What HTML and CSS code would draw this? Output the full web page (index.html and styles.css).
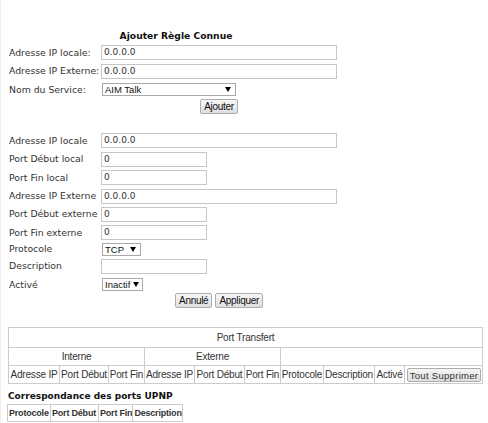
FILE: index.html
```html
<!DOCTYPE html>
<html lang="fr">
<head>
<meta charset="utf-8">
<title>Port Transfert</title>
<link rel="stylesheet" href="styles.css">
</head>
<body>
<div class="page">
  <div class="rule-form">
    <div class="form-title">Ajouter Règle Connue</div>
    <div class="grid known">
      <label class="lbl">Adresse IP locale:</label>
      <div class="field wide">0.0.0.0</div>
      <label class="lbl">Adresse IP Externe:</label>
      <div class="field wide">0.0.0.0</div>
      <label class="lbl">Nom du Service:</label>
      <div class="select svc"><span>AIM Talk</span><svg width="6" height="5" viewBox="0 0 6 5"><path d="M0 0H6L3 5Z"/></svg></div>
      <span></span>
      <div class="actions"><button class="btn">Ajouter</button></div>
    </div>
  </div>

  <div class="rule-form second">
    <div class="grid custom">
      <label class="lbl">Adresse IP locale</label>
      <div class="field wide">0.0.0.0</div>
      <label class="lbl">Port Début local</label>
      <div class="field short">0</div>
      <label class="lbl">Port Fin local</label>
      <div class="field short">0</div>
      <label class="lbl">Adresse IP Externe</label>
      <div class="field wide">0.0.0.0</div>
      <label class="lbl">Port Début externe</label>
      <div class="field short">0</div>
      <label class="lbl">Port Fin externe</label>
      <div class="field short">0</div>
      <label class="lbl">Protocole</label>
      <div class="select proto"><span>TCP</span><svg width="6" height="5" viewBox="0 0 6 5"><path d="M0 0H6L3 5Z"/></svg></div>
      <label class="lbl">Description</label>
      <div class="field short"></div>
      <label class="lbl">Activé</label>
      <div class="select active"><span>Inactif</span><svg width="6" height="5" viewBox="0 0 6 5"><path d="M0 0H6L3 5Z"/></svg></div>
      <span></span>
      <div class="actions"><button class="btn">Annulé</button><button class="btn">Appliquer</button></div>
    </div>
  </div>

  <table class="fwd">
    <colgroup>
      <col class="c51"><col class="c49"><col class="c36">
      <col class="c50"><col class="c50"><col class="c36">
      <col class="c43"><col class="c51"><col class="c30"><col class="c78">
    </colgroup>
    <tr><td colspan="10" class="caption">Port Transfert</td></tr>
    <tr><td colspan="3">Interne</td><td colspan="3">Externe</td><td colspan="4"></td></tr>
    <tr>
      <td>Adresse IP</td><td>Port Début</td><td>Port Fin</td>
      <td>Adresse IP</td><td>Port Début</td><td>Port Fin</td>
      <td>Protocole</td><td>Description</td><td>Activé</td>
      <td class="btn-cell"><button class="btn del">Tout Supprimer</button></td>
    </tr>
  </table>

  <div class="upnp-title">Correspondance des ports UPNP</div>
  <table class="upnp">
    <colgroup><col class="c43"><col class="c48"><col class="c34"><col class="c50"></colgroup>
    <tr><td>Protocole</td><td>Port Début</td><td>Port Fin</td><td>Description</td></tr>
  </table>
</div>
</body>
</html>
```
FILE: styles.css
```css
html, body {
  margin: 0;
  padding: 0;
  background: #fff;
}

.page {
  padding: 29px 0 0 1px;
  font-family: "DejaVu Sans", Verdana, sans-serif;
  font-size: 9.3px;
  color: #333;
  border-left: 1px solid #eee;
  height: 423px;
  box-sizing: border-box;
  overflow: hidden;
}

.rule-form {
  width: 330px;
  margin-left: 7px;
}

.form-title {
  text-align: center;
  font-weight: bold;
  font-size: 9.2px;
  color: #111;
  margin-left: 4px;
  height: 14px;
  line-height: 14px;
}

.grid {
  display: grid;
  grid-template-columns: 92px 236px;
  align-items: center;
}

.grid.known {
  grid-template-rows: 19px 18.5px 18px 15px;
}

.grid.custom {
  grid-template-rows: 18.5px 18.5px 18.5px 18.5px 17.5px 19.5px 14px 20px 17px 15px;
}

.second {
  margin-top: 17.75px;
}

.lbl {
  white-space: nowrap;
  line-height: 14px;
}

.field {
  box-sizing: border-box;
  height: 15px;
  border: 1px solid #c6c6c6;
  background: #fff;
  padding: 0 2px;
  line-height: 13px;
  font-family: "DejaVu Sans", sans-serif;
  font-size: 9px;
  color: #333;
}

.field.wide { width: 236px; }
.field.short { width: 106px; }

.select {
  box-sizing: border-box;
  height: 13px;
  margin-left: 1px;
  border: 1px solid #a9a9a9;
  background: #fff;
  display: flex;
  align-items: center;
  justify-content: space-between;
  padding: 0 4px 0 2px;
  font-family: "Liberation Sans", Arial, sans-serif;
  font-size: 9.5px;
  color: #111;
}

.select svg { fill: #000; flex: none; }
.select.svc { width: 134px; }
.select.proto { width: 39px; }
.select.active { width: 41px; padding-right: 3px; }

.actions {
  display: flex;
  justify-content: center;
  gap: 3px;
}

.btn {
  box-sizing: border-box;
  height: 15px;
  padding: 0 3px;
  border: 1px solid #adadad;
  border-radius: 2px;
  background: linear-gradient(#f6f6f6, #dedede);
  font-family: "Liberation Sans", Arial, sans-serif;
  font-size: 10px;
  letter-spacing: -0.3px;
  color: #111;
  line-height: 13px;
}

.fwd {
  margin: 19px 0 0 6px;
  width: 475px;
  table-layout: fixed;
  border-collapse: collapse;
  font-family: "Liberation Sans", Arial, sans-serif;
  font-size: 10px;
  letter-spacing: -0.2px;
  color: #333;
}

.c30 { width: 30px; }
.c34 { width: 34px; }
.c36 { width: 36px; }
.c43 { width: 43px; }
.c48 { width: 48px; }
.c49 { width: 49px; }
.c50 { width: 50px; }
.c51 { width: 51px; }
.c78 { width: 78px; }

.fwd td {
  border: 1px solid #ccc;
  padding: 0;
  height: 17px;
  text-align: center;
  white-space: nowrap;
  overflow: hidden;
}

.fwd td.caption {
  height: 19px;
}

.fwd td.btn-cell {
  padding: 0 2px;
}

.btn.del {
  width: 74px;
  height: 14px;
  padding: 0;
  font-size: 9.5px;
  color: #333;
  letter-spacing: 0.3px;
}

.upnp-title {
  margin: 6px 0 0 6px;
  font-weight: bold;
  font-size: 9px;
  color: #111;
  height: 13px;
  line-height: 13px;
}

.upnp {
  margin: 1px 0 0 5px;
  table-layout: fixed;
  border-collapse: collapse;
  font-family: "Liberation Sans", Arial, sans-serif;
  font-size: 9px;
  letter-spacing: -0.2px;
  font-weight: bold;
  color: #333;
}

.upnp td {
  border: 1px solid #ccc;
  padding: 0 0 0 1px;
  height: 16px;
  white-space: nowrap;
  overflow: hidden;
}
```
